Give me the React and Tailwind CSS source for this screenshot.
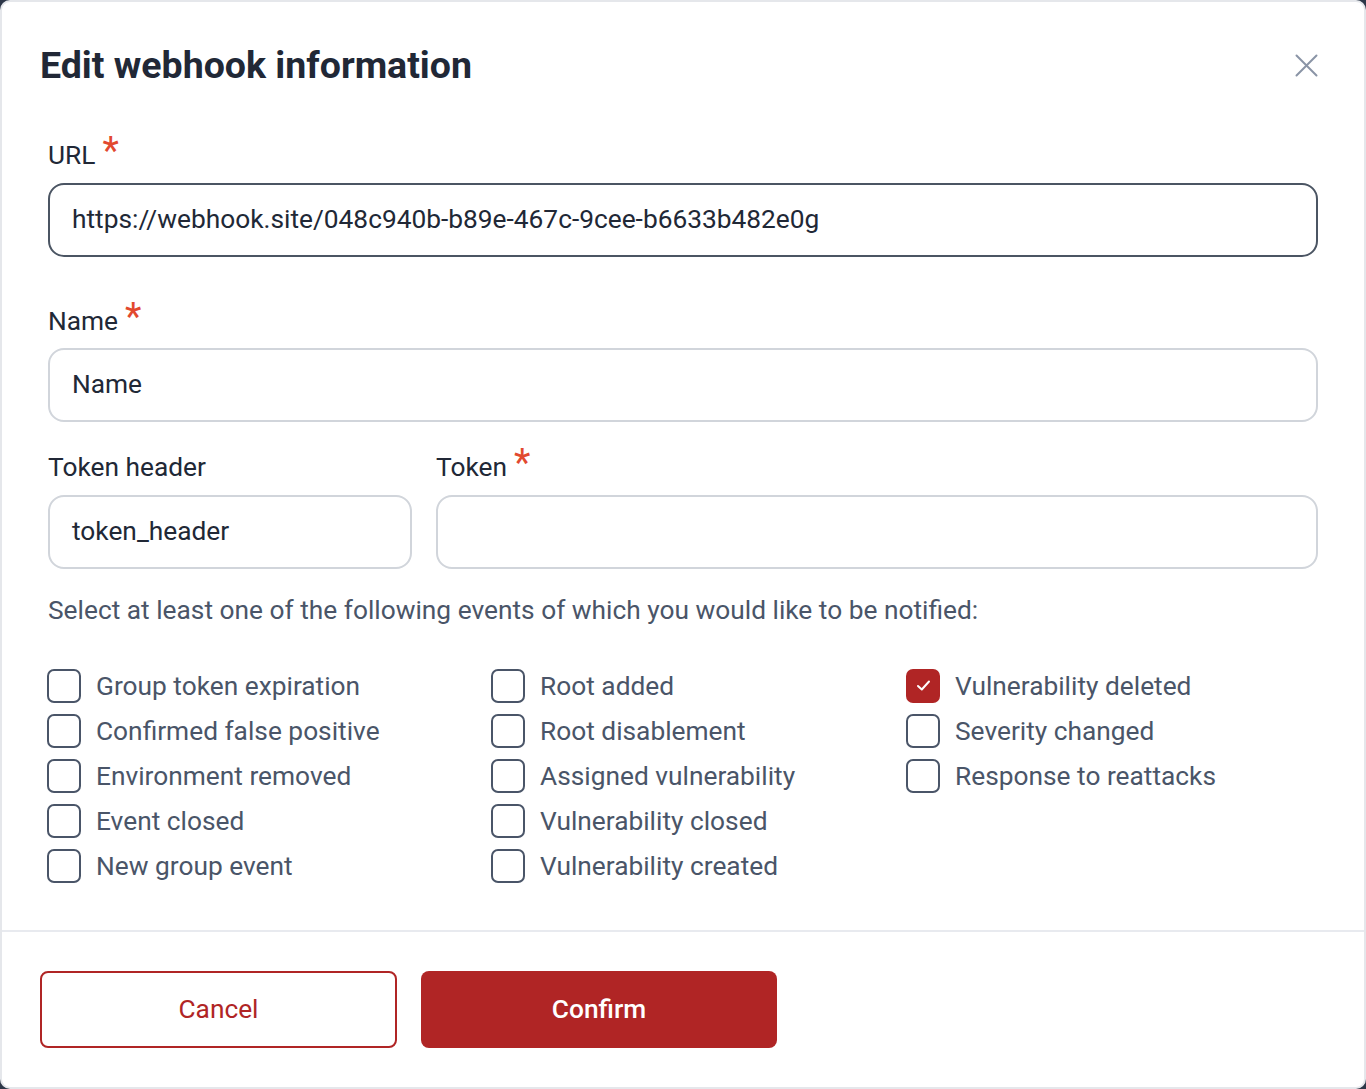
import { useState } from 'react';

const col1 = ['Group token expiration', 'Confirmed false positive', 'Environment removed', 'Event closed', 'New group event'];
const col2 = ['Root added', 'Root disablement', 'Assigned vulnerability', 'Vulnerability closed', 'Vulnerability created'];
const col3 = ['Vulnerability deleted', 'Severity changed', 'Response to reattacks'];

function Star() {
    return <span className="ml-[7px] relative -top-[4px] text-[38px] leading-[32px] text-[#e2492f]">*</span>;
}

function Label({ children, star }) {
    return (
        <div className="flex h-[32px] items-start text-[26.3px] leading-[32px] text-[#212836]">
            {children}
            {star && <Star />}
        </div>
    );
}

function Check({ label, checked, onToggle }) {
    return (
        <label className="flex h-[45px] items-center gap-[15px] cursor-pointer" onClick={onToggle}>
            {checked ? (
                <span className="flex h-[34px] w-[34px] items-center justify-center rounded-[7px] bg-[#b02525]">
                    <svg width="15" height="13" viewBox="0 0 15 13" fill="none">
                        <path d="M2 7 L5.8 10.5 L13 2.5" stroke="white" strokeWidth="2" strokeLinecap="round" strokeLinejoin="round" />
                    </svg>
                </span>
            ) : (
                <span className="h-[34px] w-[34px] rounded-[7px] border-2 border-[#4a5568] bg-white" />
            )}
            <span className="text-[26.3px] leading-[32px] text-[#4a5568]">{label}</span>
        </label>
    );
}

export default function App() {
    const [checked, setChecked] = useState({ 'Vulnerability deleted': true });
    const toggle = (k) => setChecked((c) => ({ ...c, [k]: !c[k] }));

    const column = (items, w) => (
        <div className={`flex flex-col ${w}`}>
            {items.map((it) => (
                <Check key={it} label={it} checked={!!checked[it]} onToggle={() => toggle(it)} />
            ))}
        </div>
    );

    return (
        <div className="min-h-screen bg-[#2d3748]" style={{ fontFamily: 'Roboto, "Liberation Sans", sans-serif' }}>
            <div className="flex h-[1089px] w-full flex-col rounded-[10px] border-2 border-[#e5e7eb] bg-white">
                <div className="flex items-center justify-between pl-[38px] pr-[46px] pt-[37px]">
                    <h1 className="text-[37.5px] font-bold leading-[52px] text-[#212836]">Edit webhook information</h1>
                    <button className="text-[#8a94a6]">
                        <svg width="23" height="23" viewBox="0 0 23 23" fill="none">
                            <path d="M1.5 1.5 L21.5 21.5 M21.5 1.5 L1.5 21.5" stroke="currentColor" strokeWidth="2" strokeLinecap="round" />
                        </svg>
                    </button>
                </div>

                <div className="flex flex-col pl-[45px] pr-[46px] pt-[48px]">
                    <div className="pl-[1px]"><Label star>URL</Label></div>
                    <div className="ml-[1px] mt-[12px] flex h-[74px] items-center rounded-[16px] border-2 border-[#4b5563] px-[22px] text-[26.3px] text-[#212836]">
                        https://webhook.site/048c940b-b89e-467c-9cee-b6633b482e0g
                    </div>

                    <div className="mt-[48px] pl-[1px]"><Label star>Name</Label></div>
                    <div className="ml-[1px] mt-[11px] flex h-[74px] items-center rounded-[16px] border-2 border-[#d1d5db] px-[22px] text-[26.3px] text-[#212836]">
                        Name
                    </div>

                    <div className="ml-[1px] mt-[29px] flex gap-[24px]">
                        <div className="flex w-[364px] flex-col">
                            <Label>Token header</Label>
                            <div className="mt-[12px] flex h-[74px] items-center rounded-[16px] border-2 border-[#d1d5db] px-[22px] text-[26.3px] text-[#212836]">
                                token_header
                            </div>
                        </div>
                        <div className="flex flex-1 flex-col">
                            <Label star>Token</Label>
                            <div className="mt-[12px] h-[74px] rounded-[16px] border-2 border-[#d1d5db]" />
                        </div>
                    </div>

                    <p className="ml-[1px] mt-[25px] text-[26.3px] leading-[32px] text-[#4a5568]">
                        Select at least one of the following events of which you would like to be notified:
                    </p>

                    <div className="mt-[37px] flex">
                        {column(col1, 'w-[444px]')}
                        {column(col2, 'w-[415px]')}
                        {column(col3, 'flex-1')}
                    </div>
                </div>

                <div className="mt-[42px] border-t-2 border-[#e8eaef]" />

                <div className="flex gap-[24px] pl-[38px] pt-[39px]">
                    <button className="h-[77px] w-[357px] rounded-[8px] border-2 border-[#b02525] bg-white text-[26.3px] text-[#b02525]">Cancel</button>
                    <button className="h-[77px] w-[356px] rounded-[8px] bg-[#b02525] text-[26.3px] font-medium text-white">Confirm</button>
                </div>
            </div>
        </div>
    );
}
